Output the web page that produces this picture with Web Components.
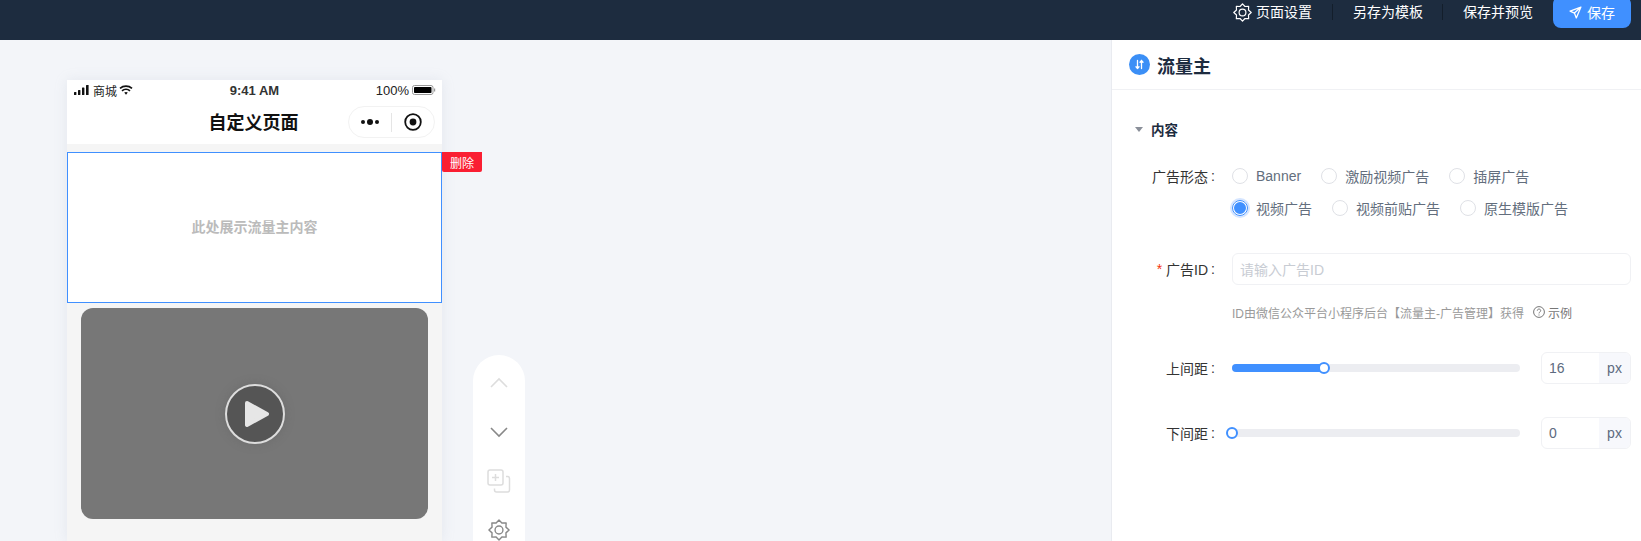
<!DOCTYPE html>
<html lang="zh-CN"><head><meta charset="utf-8"><title>流量主</title>
<style>
html,body{margin:0;padding:0;height:541px;overflow:hidden;background:#f3f5f9;font-family:"Liberation Sans","Noto Sans CJK SC",sans-serif;font-size:14px;color:#333}
</style></head><body>
<app-shell></app-shell>
<script>
const gear=(s,c,w=1.6)=>{let p=[];for(let i=0;i<16;i++){const r=i%2?8.2:11,a=(i*22.5-90)*Math.PI/180;p.push((12+r*Math.cos(a)).toFixed(2)+' '+(12+r*Math.sin(a)).toFixed(2))}
return `<svg width="${s}" height="${s}" viewBox="0 0 24 24" fill="none" stroke="${c}" stroke-width="${w}" stroke-linejoin="round"><path d="M${p.join('L')}Z"/><circle cx="12" cy="12" r="4.300"/></svg>`};
const def=(name,css,html)=>{customElements.define(name,class extends HTMLElement{constructor(){super();const r=this.attachShadow({mode:'open'});r.innerHTML=`<style>${css}</style>`+(typeof html==='function'?html(this):html);}})};

def('top-bar',`:host{display:flex;height:40px;background:#1d2c3f;align-items:center;justify-content:flex-end;padding:0 10px 16px 0;box-sizing:border-box;color:#fff;font-size:14px;overflow:hidden}
.i{display:flex;align-items:center;gap:4px;white-space:nowrap}
.i span,.t{position:relative;top:-1px}
.d{width:1px;height:16px;background:#131e2b;margin:0 20px}
.d.e{margin:0 20px 0 19px}
.b{width:78px;height:32px;flex:none;margin-left:20px;background:#4090ff;border-radius:8px;display:flex;align-items:center;justify-content:center;gap:5px}`,
`<div class="i">${gear(19,'#fff',1.5)}<span>页面设置</span></div><div class="d"></div><div class="i"><span>另存为模板</span></div><div class="d e"></div><div class="i"><span>保存并预览</span></div>
<div class="b"><svg width="13" height="13" viewBox="0 0 24 24" fill="none" stroke="#fff" stroke-width="2.400" stroke-linejoin="round" stroke-linecap="round"><path d="M22 2 2 9.500l8 3.500 3.500 9zM22 2 10 13"/></svg><span>保存</span></div>`);

def('phone-status',`:host{display:grid;grid-template-columns:1fr auto 1fr;align-items:center;height:20px;padding:0 6px 0 7px;font-size:13px;color:#222;background:#fff}
.l,.r{display:flex;align-items:center}.r{justify-content:flex-end}.t{font-weight:700;font-size:13px;color:#333;margin-left:-1px}
.l span{font-size:12px;margin:0 2px 0 4px}`,
`<div class="l"><svg width="15" height="10" viewBox="0 0 15 10" fill="#111"><rect x="0" y="7" width="2.400" height="3" rx=".5"/><rect x="4" y="5" width="2.400" height="5" rx=".5"/><rect x="8" y="2.600" width="2.400" height="7.400" rx=".5"/><rect x="12" y="0" width="2.600" height="10" rx=".5"/></svg><span>商城</span>
<svg width="14" height="10" viewBox="0 0 14 10" fill="none" stroke="#111" stroke-width="1.700"><path d="M1 3.400C4.400.4 9.600.4 13 3.400M3 5.900c2.300-2 5.700-2 8 0"/><path d="M5.200 7.600c1-.9 2.600-.9 3.600 0L7 9.800z" fill="#111" stroke="none"/></svg></div>
<div class="t">9:41 AM</div>
<div class="r"><span>100%</span><svg style="margin-left:3px" width="24" height="10" viewBox="0 0 24 10"><rect x=".5" y=".5" width="20.500" height="9" rx="2" fill="none" stroke="#999"/><rect x="2" y="2" width="17.500" height="6" rx=".8" fill="#000"/><rect x="22" y="3.500" width="1.200" height="3" fill="#999"/></svg></div>`);

def('phone-nav',`:host{display:block;position:relative;height:44px;background:#fff}
.t{height:42px;display:flex;align-items:center;justify-content:center;font-size:18px;font-weight:700;color:#111;padding-right:2px}
.c{position:absolute;right:7px;top:6px;width:87px;height:32px;box-sizing:border-box;border:1px solid #f2f2f2;border-radius:16px;display:flex;align-items:center}
.c>div{flex:1;display:flex;justify-content:center;align-items:center}.s{flex:none!important;width:1px;height:19px;background:#e5e5e5}`,
`<div class="t">自定义页面</div><div class="c"><div><svg width="20" height="8" viewBox="0 0 20 8" fill="#111"><circle cx="3" cy="4" r="2"/><circle cx="10" cy="4" r="3"/><circle cx="17" cy="4" r="2"/></svg></div><div class="s"></div><div><svg width="18" height="18" viewBox="0 0 18 18"><circle cx="9" cy="9" r="7.800" fill="none" stroke="#111" stroke-width="1.800"/><circle cx="9" cy="9" r="3.400" fill="#111"/></svg></div></div>`);

def('ad-placeholder',`:host{display:flex;position:relative;height:151px;box-sizing:border-box;margin-top:8px;padding-bottom:3px;background:#fff;border:1px solid #4090ff;align-items:center;justify-content:center;font-size:14px;font-weight:700;color:#bbb}
.del{position:absolute;left:100%;top:-1px;margin-left:1px;width:40px;height:20px;background:#fa1e32;color:#fff;font-size:12px;font-weight:400;display:flex;align-items:center;justify-content:center;border-radius:0 0 2px 2px}`,
`<span>此处展示流量主内容</span><div class="del">删除</div>`);

def('video-card',`:host{display:flex;height:211px;margin:5px 14px 0;background:#777;border-radius:12px;align-items:center;justify-content:center}
.p{width:60px;height:60px;box-sizing:border-box;border:2px solid #ddd;border-radius:50%;background:#555;display:flex;align-items:center;justify-content:center;box-shadow:0 0 10px rgba(90,90,90,.35)}`,
`<div class="p"><svg width="26" height="28" viewBox="0 0 26 28" style="margin-left:4px"><path d="M3 3 23 14 3 25z" fill="#e6e6e6" stroke="#e6e6e6" stroke-width="4" stroke-linejoin="round"/></svg></div>`);

def('phone-preview',`:host{display:block;width:375px;height:461px;flex:none;background:#f5f5f5;box-shadow:0 0 12px rgba(160,170,190,.18)}`,
`<phone-status></phone-status><phone-nav></phone-nav><ad-placeholder></ad-placeholder><video-card></video-card>`);

def('float-toolbar',`:host{display:block;width:52px;height:240px;flex:none;margin:275px 0 0 31px;padding-top:3px;background:#fff;border-radius:26px}
.b{height:49px;display:flex;align-items:center;justify-content:center}`,
`<div class="b"><svg width="20" height="12" viewBox="0 0 20 12" fill="none" stroke="#ddd" stroke-width="1.600"><path d="M2 10 10 2l8 8"/></svg></div>
<div class="b"><svg width="20" height="12" viewBox="0 0 20 12" fill="none" stroke="#888" stroke-width="1.600"><path d="M2 2l8 8 8-8"/></svg></div>
<div class="b"><svg width="24" height="24" viewBox="0 0 24 24" fill="none" stroke="#ddd" stroke-width="1.500"><rect x="1" y="1" width="15" height="15" rx="2"/><path d="M8.500 5v7M5 8.500h7M19 7.500h1.500a2 2 0 0 1 2 2V21a2 2 0 0 1-2 2H9.500a2 2 0 0 1-2-2v-1.500"/></svg></div>
<div class="b">${gear(22,'#888',1.500)}</div>`);

def('form-row',`:host{display:flex;align-items:flex-start}
.l{width:83px;flex:none;height:32px;display:flex;align-items:center;justify-content:flex-end;color:#333;margin-right:17px;white-space:nowrap}
.req{color:#f5320f;margin-right:4px}.co{padding-left:3px}
.c{flex:1;min-width:0}`,
h=>`<div class="l">${h.hasAttribute('required')?'<span class="req">*</span>':''}<span>${h.getAttribute('label')}</span><span class="co">:</span></div><div class="c"><slot></slot></div>`);

def('radio-group',`:host{display:flex;flex-direction:column}.r{display:flex;height:32px;align-items:center}`,`<div class="r"><slot name="a"></slot></div><div class="r"><slot name="b"></slot></div>`);

def('radio-item',`:host{display:flex;align-items:center;margin-right:20px;color:#636e7d;white-space:nowrap}
.o{width:16px;height:16px;box-sizing:border-box;border:1px solid #dfe1e6;border-radius:50%;background:#fff;margin-right:8px;flex:none}
:host([checked]) .o{box-shadow:0 0 0 2px #d5e5ff;background:#4090ff;border:2px solid #fff;outline:1px solid #4090ff;outline-offset:-1px}`,
`<div class="o"></div><slot></slot>`);

def('text-input',`:host{display:flex;align-items:center;height:32px;box-sizing:border-box;border:1px solid #f0f1f4;border-radius:6px;padding:0 7px;color:#c8ccd3;background:#fff}`,`<slot></slot>`);

def('help-line',`:host{display:flex;align-items:center;height:20px;margin-top:17px;font-size:12px;color:#999}
svg{margin:0 3px 0 9px}`,`<slot></slot><svg width="12" height="12" viewBox="0 0 12 12" fill="none" stroke="#777" stroke-width="1"><circle cx="6" cy="6" r="5.400"/><path d="M4.300 4.700c0-2.200 3.400-2.200 3.400 0 0 1.300-1.700 1.200-1.700 2.700"/><path d="M6 8.500v1"/></svg><span style="color:#777">示例</span>`);

def('slider-field',`:host{display:flex;align-items:center;gap:21px;height:32px}
.t{flex:1;height:8px;background:#ecedf1;border-radius:4px;position:relative}
.f{height:100%;background:#4090ff;border-radius:4px}
.k{position:absolute;top:50%;width:12px;height:12px;box-sizing:border-box;transform:translate(-50%,-50%);border:2.500px solid #4090ff;border-radius:50%;background:#fff}
.n{width:90px;height:32px;box-sizing:border-box;border:1px solid #f0f1f4;border-radius:6px;display:flex;overflow:hidden;flex:none}
.v{flex:1;display:flex;align-items:center;padding-left:7px;color:#5d6b80}
.u{width:31px;background:#f7f8fc;display:flex;align-items:center;justify-content:center;color:#5d6b80}`,
h=>{const p=h.getAttribute('pct');return `<div class="t"><div class="f" style="width:${p}%"></div><div class="k" style="left:${p}%"></div></div><div class="n"><div class="v">${h.getAttribute('value')}</div><div class="u">px</div></div>`});

def('settings-panel',`:host{display:block;width:529px;flex:none;background:#fff;border-left:1px solid #e9ebf0}
.h{height:49px;border-bottom:1px solid #f0f1f4;display:flex;align-items:center;padding-left:17px;gap:7px;font-size:18px;font-weight:700;color:#1d2c3f}
.ic{width:21px;height:21px;border-radius:50%;background:#3b8ff6;display:flex;align-items:center;justify-content:center}
.b{padding:29px 10px 0 20px}
.s{display:flex;align-items:center;height:20px;font-weight:700;color:#1d2c3f;margin-bottom:21px;font-size:13.500px}
.s i{width:0;height:0;border:4px solid transparent;border-top:5px solid #8a8f99;border-bottom:0;margin:0 8px 0 3px}`,
`<div class="h"><div class="ic"><svg width="11" height="11" viewBox="0 0 11 11" fill="none" stroke="#fff" stroke-width="1.300" stroke-linecap="round" stroke-linejoin="round"><path d="M3.500 1.500V9.500M2 7.800l1.500 1.700L5 7.800M7.500 9.500V1.500M6 3.200l1.500-1.700L9 3.200"/></svg></div><span>流量主</span></div>
<div class="b"><div class="s"><i></i><span>内容</span></div>
<form-row label="广告形态"><radio-group>
<radio-item slot="a">Banner</radio-item><radio-item slot="a">激励视频广告</radio-item><radio-item slot="a">插屏广告</radio-item>
<radio-item slot="b" checked>视频广告</radio-item><radio-item slot="b">视频前贴广告</radio-item><radio-item slot="b">原生模版广告</radio-item>
</radio-group></form-row>
<form-row label="广告ID" required style="margin-top:29px"><text-input>请输入广告ID</text-input><help-line>ID由微信公众平台小程序后台【流量主-广告管理】获得</help-line></form-row>
<form-row label="上间距" style="margin-top:30px"><slider-field pct="32" value="16"></slider-field></form-row>
<form-row label="下间距" style="margin-top:33px"><slider-field pct="0" value="0"></slider-field></form-row>
</div>`);

def('app-shell',`:host{display:block;height:541px;overflow:hidden}
.m{display:flex;height:501px}.c{flex:1;display:flex;align-items:flex-start;padding:40px 0 0 67px;overflow:hidden;min-width:0}`,
`<top-bar></top-bar><div class="m"><div class="c"><phone-preview></phone-preview><float-toolbar></float-toolbar></div><settings-panel></settings-panel></div>`);
</script></body></html>
